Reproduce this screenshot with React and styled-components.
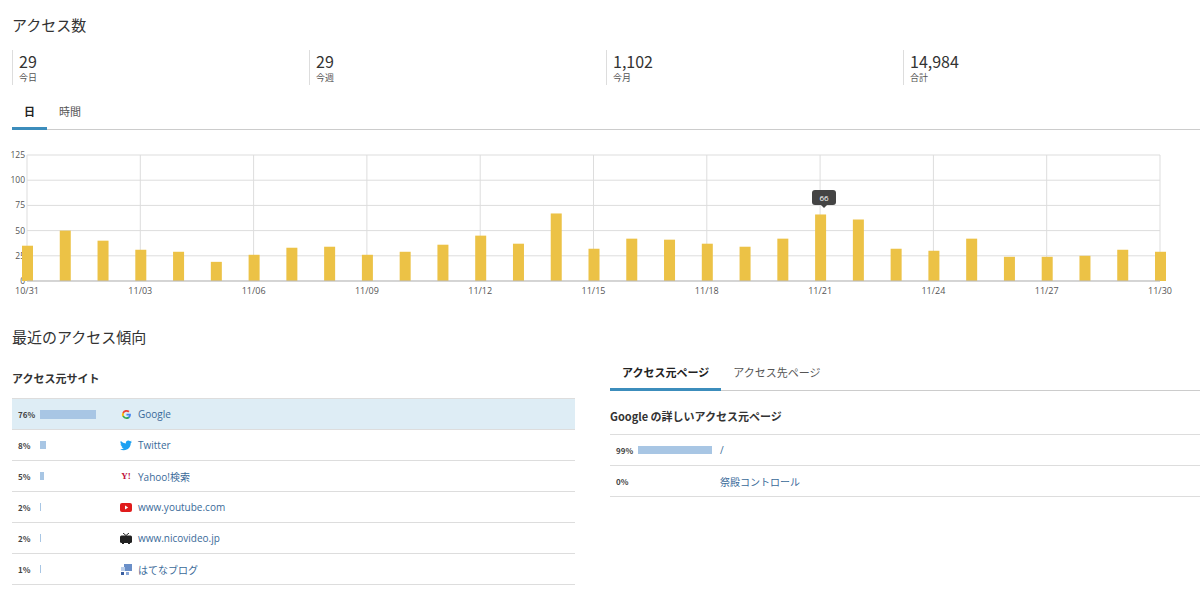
import React from "react";
import styled, { createGlobalStyle } from "styled-components";

const Global = createGlobalStyle`
  body { margin: 0; background: #fff; font-family: "Noto Sans CJK JP", "Open Sans", sans-serif; color: #333; }
`;

const Page = styled.div`
  padding: 12px 0 0 12px;
  width: 1188px;
`;

const H2 = styled.h2`
  margin: 0 0 12px;
  font-size: 15px;
  font-weight: 400;
  line-height: 26px;
`;

const Stats = styled.div`
  display: grid;
  grid-template-columns: repeat(4, 1fr);
`;

const Stat = styled.div`
  border-left: 1px solid #ddd;
  padding: 1px 0 0 6px;
  height: 34px;
  & b { display: block; font-weight: 400; font-size: 16px; line-height: 20px; }
  & span { display: block; font-size: 9px; color: #555; line-height: 13px; }
`;

const Tabs = styled.div`
  display: flex;
  border-bottom: 1px solid #ccc;
  margin-top: 18px;
`;

const Tab = styled.div`
  padding: 0 ${(p) => p.$pad || 12}px 8px;
  font-size: 11px;
  font-weight: ${(p) => (p.$active ? 700 : 400)};
  color: ${(p) => (p.$active ? "#222" : "#555")};
  border-bottom: 3px solid ${(p) => (p.$active ? "#3c8dbc" : "transparent")};
  margin-bottom: -1px;
`;

const Bottom = styled.div`
  display: grid;
  grid-template-columns: 563px 590px;
  gap: 35px;
`;

const H3 = styled.h3`
  font-size: 11px;
  font-weight: 700;
  margin: 0;
  line-height: 16px;
`;

const Row = styled.div`
  display: flex;
  align-items: center;
  height: 30px;
  border-bottom: 1px solid #ddd;
  background: ${(p) => (p.$hl ? "#deedf5" : "transparent")};
  font-size: 10px;
`;

const Pct = styled.span`
  width: 22px;
  padding-left: 6px;
  font-size: 8px;
  font-weight: 700;
  color: #444;
`;

const BarCell = styled.span`
  width: ${(p) => p.$w}px;
  flex: none;
`;

const Bar = styled.span`
  display: block;
  height: ${(p) => p.$h || 8}px;
  background: #a8c6e4;
`;

const Link = styled.span`
  display: flex;
  align-items: center;
  gap: 6px;
  color: #3a6a99;
  font-family: "Open Sans", "Noto Sans CJK JP", sans-serif;
`;

const Icon = styled.span`
  width: 12px;
  display: inline-flex;
  justify-content: center;
`;

const vals = [35,50,40,31,29,19,26,33,34,26,29,36,45,37,67,32,42,41,37,34,42,66,61,32,30,42,24,24,25,31,29];
const labels = ["10/31","11/03","11/06","11/09","11/12","11/15","11/18","11/21","11/24","11/27","11/30"];

function Chart() {
  const x0 = 27, x1 = 1160, y0 = 155, y1 = 281;
  const step = (x1 - x0) / 30;
  const yv = (v) => y1 - (v / 125) * (y1 - y0);
  return (
    <svg width="1188" height="160" viewBox="0 140 1188 160" style={{ display: "block", marginLeft: -12, marginTop: 10 }}>
      {[0, 25, 50, 75, 100, 125].map((v) => (
        <g key={v}>
          <line x1={x0} x2={x1} y1={yv(v)} y2={yv(v)} stroke="#ddd" />
          <text x={x0 - 2} y={yv(v) + 3} fontSize="8.5" fill="#555" textAnchor="end" fontFamily="Open Sans">{v}</text>
        </g>
      ))}
      {labels.map((l, i) => {
        const x = x0 + i * 3 * step;
        return (
          <g key={l}>
            <line x1={x} x2={x} y1={y0} y2={y1} stroke="#ddd" />
            <text x={x} y={y1 + 13} fontSize="9" fill="#555" textAnchor="middle" fontFamily="Open Sans">{l}</text>
          </g>
        );
      })}
      {vals.map((v, i) => (
        <rect key={i} x={x0 + i * step - 5} y={yv(v)} width="11" height={y1 - yv(v)} fill="#ecc246" />
      ))}
      <line x1={x0} x2={x1} y1={y1} y2={y1} stroke="#bbb" />
      <rect x={812} y={190} width={24} height={15} rx={3} fill="#444" />
      <path d="M821 205 L824 208 L827 205 Z" fill="#444" />
      <text x={824} y={201} fontSize="8" fill="#fff" textAnchor="middle" fontFamily="Open Sans">66</text>
    </svg>
  );
}

const sites = [
  { p: "76%", w: 56, name: "Google", icon: <svg width="11" height="11" viewBox="0 0 24 24"><path d="M21.6 12.2c0-.7-.1-1.4-.2-2H12v3.9h5.4a4.6 4.6 0 0 1-2 3v2.5h3.2c1.9-1.8 3-4.4 3-7.4z" fill="#4285F4"/><path d="M12 22c2.7 0 5-.9 6.6-2.4l-3.2-2.5c-.9.6-2 1-3.4 1-2.6 0-4.8-1.800-5.6-4.1H3.1v2.6A10 10 0 0 0 12 22z" fill="#34A853"/><path d="M6.4 14c-.2-.6-.3-1.3-.3-2s.1-1.4.3-2V7.4H3.1a10 10 0 0 0 0 9.2z" fill="#FBBC05"/><path d="M12 6c1.5 0 2.8.5 3.8 1.5l2.9-2.9A10 10 0 0 0 3.1 7.4L6.4 10C7.2 7.7 9.4 6 12 6z" fill="#EA4335"/></svg> },
  { p: "8%", w: 6, name: "Twitter", icon: <svg width="12" height="11" viewBox="0 0 24 20"><path d="M24 2.4a10 10 0 0 1-2.8.8A5 5 0 0 0 23.3.5a10 10 0 0 1-3.1 1.2A4.9 4.9 0 0 0 11.8 6 14 14 0 0 1 1.7.9a4.9 4.9 0 0 0 1.5 6.6 5 5 0 0 1-2.2-.6 4.9 4.9 0 0 0 4 4.9 5 5 0 0 1-2.2.1 4.9 4.9 0 0 0 4.6 3.4A9.9 9.9 0 0 1 0 17.3 14 14 0 0 0 7.5 19.5c9.1 0 14-7.5 14-14v-.6A10 10 0 0 0 24 2.4z" fill="#1da1f2"/></svg> },
  { p: "5%", w: 4, name: "Yahoo!検索", icon: <span style={{ color: "#c0143c", fontSize: 9, fontWeight: 700, fontFamily: "Liberation Serif" }}>Y!</span> },
  { p: "2%", w: 1, name: "www.youtube.com", icon: <svg width="12" height="9" viewBox="0 0 12 9"><rect width="12" height="9" rx="2" fill="#e01b1b"/><path d="M5 2.5v4l3.2-2z" fill="#fff"/></svg> },
  { p: "2%", w: 1, name: "www.nicovideo.jp", icon: <svg width="12" height="11" viewBox="0 0 12 11"><path d="M3 0l3 2.5L9 0" stroke="#222" fill="none"/><rect y="2.5" width="12" height="7.5" rx="1.5" fill="#222"/><rect x="2" y="9.5" width="2" height="1.5" fill="#222"/><rect x="8" y="9.5" width="2" height="1.5" fill="#222"/></svg> },
  { p: "1%", w: 1, name: "はてなブログ", icon: <svg width="11" height="11" viewBox="0 0 11 11"><rect x="3" y="0" width="8" height="7" fill="#6a8fc8"/><rect x="0" y="3" width="4" height="4" fill="#b9cde9"/><rect x="0" y="8" width="3" height="3" fill="#3b5fa0"/><rect x="5" y="8" width="3" height="3" fill="#8aa8d8"/></svg> },
];

export default function App() {
  return (
    <Page>
      <Global />
      <H2>アクセス数</H2>
      <Stats>
        {[["29", "今日"], ["29", "今週"], ["1,102", "今月"], ["14,984", "合計"]].map(([n, l]) => (
          <Stat key={l}><b>{n}</b><span>{l}</span></Stat>
        ))}
      </Stats>
      <Tabs>
        <Tab $active>日</Tab>
        <Tab>時間</Tab>
      </Tabs>
      <Chart />
      <H2 style={{ marginTop: 24 }}>最近のアクセス傾向</H2>
      <Bottom>
        <div>
          <H3 style={{ margin: "8px 0 12px" }}>アクセス元サイト</H3>
          {sites.map((s, i) => (
            <Row key={s.name} $hl={i === 0} style={i === 0 ? { borderTop: "1px solid #ddd" } : null}>
              <Pct>{s.p}</Pct>
              <BarCell $w={80}><Bar style={{ width: s.w }} $h={i === 0 ? 9 : 8} /></BarCell>
              <Link><Icon>{s.icon}</Icon>{s.name}</Link>
            </Row>
          ))}
        </div>
        <div>
          <Tabs style={{ marginTop: 2 }}>
            <Tab $active $pad={12}>アクセス元ページ</Tab>
            <Tab $pad={12}>アクセス先ページ</Tab>
          </Tabs>
          <H3 style={{ margin: "17px 0 10px" }}>Google の詳しいアクセス元ページ</H3>
          <Row style={{ borderTop: "1px solid #ddd" }}>
            <Pct>99%</Pct>
            <BarCell $w={82}><Bar style={{ width: 74 }} /></BarCell>
            <Link>/</Link>
          </Row>
          <Row>
            <Pct>0%</Pct>
            <BarCell $w={82} />
            <Link>祭殿コントロール</Link>
          </Row>
        </div>
      </Bottom>
    </Page>
  );
}
